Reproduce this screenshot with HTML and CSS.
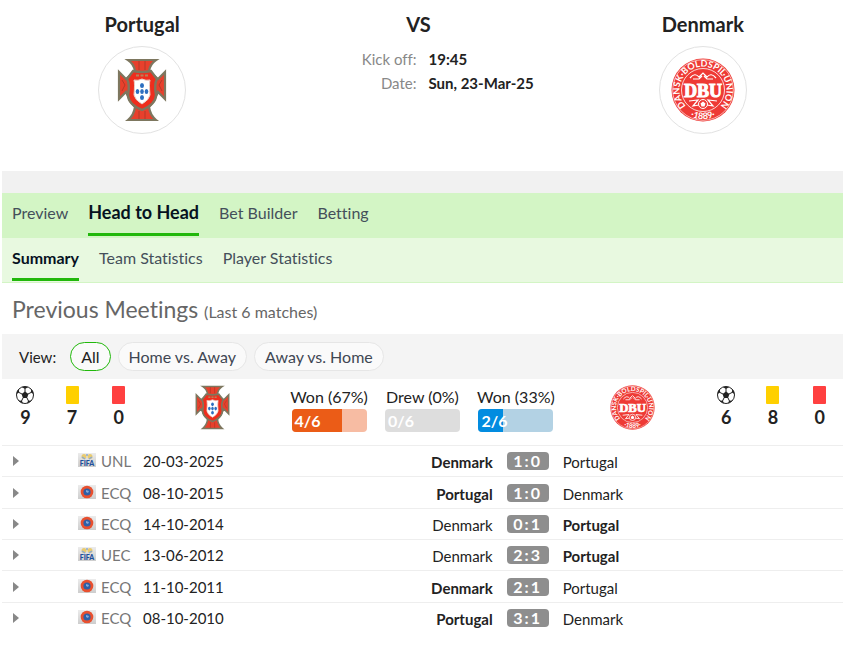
FILE: index.html
```html
<!DOCTYPE html>
<html lang="en">
<head>
  <meta charset="utf-8">
  <meta name="viewport" content="width=device-width, initial-scale=1">
  <title>Portugal vs Denmark - Head to Head</title>
  <link rel="stylesheet" href="styles.css">
</head>
<body>
  <!-- shared icons -->
  <svg class="icon-defs" width="0" height="0" aria-hidden="true">
    <defs>
      <linearGradient id="tile" x1="0" y1="0" x2="0" y2="1">
        <stop offset="0" stop-color="#ececec"/>
        <stop offset="1" stop-color="#cdcdcd"/>
      </linearGradient>
      <path id="ringTop" d="M17 50A23.400 23.400 0 1 1 47 50"/>
      <path id="ringBottom" d="M14 55A29.200 29.200 0 0 0 50 55"/>
    </defs>
    <symbol id="portugal" viewBox="0 0 48 64">
      <path d="M10 2H38Q32 6 31 13L40 21L47 14V41L40 34L36 43L31 49Q32 57 38 62H10Q16 57 17 49L12 43L8 34L1 41V14L8 21L17 13Q16 6 10 2Z" fill="#e8402c" stroke="#7d775f" stroke-width="2.200"/>
      <path d="M21 3V12M27 3V12M21 53V61M27 53V61" stroke="#b23a28" stroke-width="1"/>
      <path d="M4 22L7 27L4 33M44 22L41 27L44 33" fill="none" stroke="#b23a28"/>
      <path d="M9 21L15 13Q24 15 33 13L39 21Q36 26 38 37Q38 46 24 52Q10 46 10 37Q12 26 9 21Z" fill="#ee2e1d" stroke="#7d775f" stroke-width="2.400"/>
      <path d="M18 17.500H30" stroke="#b7825a" stroke-width="2" stroke-dasharray="3 1.500"/>
      <path d="M16 22Q20 23 24 21Q28 23 32 22Q31 26 32 37Q31 42 24 46Q17 42 16 37Q17 26 16 22Z" fill="#fff" stroke="#e9cfc8"/>
      <g fill="#2d6fc0">
        <ellipse cx="24" cy="27.500" rx="2" ry="2.600"/>
        <ellipse cx="19.500" cy="33.500" rx="1.800" ry="2.600"/>
        <ellipse cx="24" cy="33.500" rx="1.800" ry="2.600"/>
        <ellipse cx="28.500" cy="33.500" rx="1.800" ry="2.600"/>
        <ellipse cx="24" cy="39.500" rx="2" ry="2.600"/>
      </g>
    </symbol>
    <symbol id="denmark" viewBox="0 0 64 64">
      <circle cx="32" cy="32" r="31.500" fill="#ee3a35"/>
      <circle cx="32" cy="32" r="30.300" fill="none" stroke="#fff" stroke-width=".6"/>
      <circle cx="32" cy="32" r="21.500" fill="none" stroke="#fff" stroke-width=".8"/>
      <g class="crest-ring">
        <text><textPath href="#ringTop" startOffset="50%">DANSK·BOLDSPIL·UNION</textPath></text>
        <text><textPath href="#ringBottom" startOffset="50%">·1889·</textPath></text>
      </g>
      <path d="M19 20Q24 14 28 19L32 15L36 19Q40 14 45 20M22 21H28L31 18M42 21H36L33 18M18 43L27 42L22 48L28 47M46 43L37 42L42 48L36 47" fill="none" stroke="#fff" stroke-width="1.200"/>
      <circle cx="32" cy="46" r="4.500" fill="none" stroke="#fff"/>
      <path d="M32 43.500L34.500 45.500L33.500 48.500H30.500L29.500 45.500Z" fill="#fff"/>
      <text class="crest-name" x="32" y="39">DBU</text>
    </symbol>
    <symbol id="ball" viewBox="0 0 20 20">
      <circle cx="10" cy="10" r="8.500" fill="#fff" stroke="#222" stroke-width="1"/>
      <g fill="#222">
        <path d="M10 6.500L13.400 9L12.100 13H7.900L6.600 9Z"/>
        <path d="M6.800 2Q10 .8 13.200 2L10 3.900Z"/>
        <path d="M1.400 9Q1.600 5.900 3.600 4L4.300 7.500Z"/>
        <path d="M18.600 9Q18.400 5.900 16.400 4L15.700 7.500Z"/>
        <path d="M3.700 15.600L6.900 15.800L8 18.400Q5.200 17.900 3.700 15.600Z"/>
        <path d="M16.300 15.600L13.100 15.800L12 18.400Q14.800 17.900 16.300 15.600Z"/>
      </g>
      <path d="M10 3.500V7M4 7.500L7 9M16 7.500L13 9M8 13L6.500 16M12 13L13.500 16" stroke="#222"/>
    </symbol>
    <symbol id="fifa" viewBox="0 0 18 14">
      <rect width="18" height="14" fill="url(#tile)"/>
      <circle cx="6" cy="3.500" r="2.500" fill="#e9cb70"/>
      <circle cx="12" cy="3.500" r="2.500" fill="#e9cb70"/>
      <path d="M4 4L7 6M14 4L11 6M8 2H10" stroke="#8aa9d0" stroke-width="1.500"/>
      <text class="fifa-name" x="9" y="13">FIFA</text>
    </symbol>
    <symbol id="uefa" viewBox="0 0 18 14">
      <rect width="18" height="14" fill="url(#tile)"/>
      <circle cx="9" cy="7" r="6.300" fill="#e8502f"/>
      <circle cx="9" cy="7" r="3.600" fill="#2c5fa8"/>
      <path d="M8 5L11 6L10 8L8 7Z" fill="#86a9d6"/>
    </symbol>
  </svg>

  <div class="page">
    <header class="match">
      <div class="team">
        <h2>Portugal</h2>
        <div class="crest-circle">
          <svg class="crest" role="img" aria-label="Portugal"><use href="#portugal"/></svg>
        </div>
      </div>
      <div class="kickoff">
        <h2>VS</h2>
        <dl>
          <dt>Kick off:</dt>
          <dd>19:45</dd>
          <dt>Date:</dt>
          <dd>Sun, 23-Mar-25</dd>
        </dl>
      </div>
      <div class="team">
        <h2>Denmark</h2>
        <div class="crest-circle">
          <svg class="crest" role="img" aria-label="Denmark"><use href="#denmark"/></svg>
        </div>
      </div>
    </header>

    <div class="strip"></div>

    <nav class="tabs">
      <a href="#preview">Preview</a>
      <a href="#h2h" class="active">Head to Head</a>
      <a href="#builder">Bet Builder</a>
      <a href="#betting">Betting</a>
    </nav>
    <nav class="tabs sub-tabs">
      <a href="#summary" class="active">Summary</a>
      <a href="#team">Team Statistics</a>
      <a href="#player">Player Statistics</a>
    </nav>

    <h1>Previous Meetings <small>(Last 6 matches)</small></h1>

    <div class="filters">
      <span class="filters-label">View:</span>
      <button type="button" class="active">All</button>
      <button type="button">Home vs. Away</button>
      <button type="button">Away vs. Home</button>
    </div>

    <section class="stats">
      <div class="counts">
        <div><svg class="ball"><use href="#ball"/></svg><b>9</b></div>
        <div><span class="card yellow"></span><b>7</b></div>
        <div><span class="card red"></span><b>0</b></div>
      </div>
      <svg class="crest-small" role="img" aria-label="Portugal"><use href="#portugal"/></svg>
      <div class="results">
        <div>
          <span>Won (67%)</span>
          <div class="bar home"><div class="fill" style="width: 67%"></div><b>4/6</b></div>
        </div>
        <div>
          <span>Drew (0%)</span>
          <div class="bar draw"><div class="fill" style="width: 0%"></div><b>0/6</b></div>
        </div>
        <div>
          <span>Won (33%)</span>
          <div class="bar away"><div class="fill" style="width: 33%"></div><b>2/6</b></div>
        </div>
      </div>
      <svg class="crest-small" role="img" aria-label="Denmark"><use href="#denmark"/></svg>
      <div class="counts">
        <div><svg class="ball"><use href="#ball"/></svg><b>6</b></div>
        <div><span class="card yellow"></span><b>8</b></div>
        <div><span class="card red"></span><b>0</b></div>
      </div>
    </section>

    <table class="meetings">
      <colgroup>
        <col class="col-toggle">
        <col class="col-comp">
        <col class="col-date">
        <col class="col-home">
        <col class="col-score">
        <col class="col-away">
      </colgroup>
      <tbody>
        <tr>
          <td><span class="arrow"></span></td>
          <td class="comp"><svg class="flag"><use href="#fifa"/></svg>UNL</td>
          <td>20-03-2025</td>
          <td class="home winner">Denmark</td>
          <td class="score"><span>1:0</span></td>
          <td class="away">Portugal</td>
        </tr>
        <tr>
          <td><span class="arrow"></span></td>
          <td class="comp"><svg class="flag"><use href="#uefa"/></svg>ECQ</td>
          <td>08-10-2015</td>
          <td class="home winner">Portugal</td>
          <td class="score"><span>1:0</span></td>
          <td class="away">Denmark</td>
        </tr>
        <tr>
          <td><span class="arrow"></span></td>
          <td class="comp"><svg class="flag"><use href="#uefa"/></svg>ECQ</td>
          <td>14-10-2014</td>
          <td class="home">Denmark</td>
          <td class="score"><span>0:1</span></td>
          <td class="away winner">Portugal</td>
        </tr>
        <tr>
          <td><span class="arrow"></span></td>
          <td class="comp"><svg class="flag"><use href="#fifa"/></svg>UEC</td>
          <td>13-06-2012</td>
          <td class="home">Denmark</td>
          <td class="score"><span>2:3</span></td>
          <td class="away winner">Portugal</td>
        </tr>
        <tr>
          <td><span class="arrow"></span></td>
          <td class="comp"><svg class="flag"><use href="#uefa"/></svg>ECQ</td>
          <td>11-10-2011</td>
          <td class="home winner">Denmark</td>
          <td class="score"><span>2:1</span></td>
          <td class="away">Portugal</td>
        </tr>
        <tr>
          <td><span class="arrow"></span></td>
          <td class="comp"><svg class="flag"><use href="#uefa"/></svg>ECQ</td>
          <td>08-10-2010</td>
          <td class="home winner">Portugal</td>
          <td class="score"><span>3:1</span></td>
          <td class="away">Denmark</td>
        </tr>
      </tbody>
    </table>
  </div>
</body>
</html>
```
FILE: styles.css
```css
* {
  box-sizing: border-box;
}
body {
  margin: 0;
  background: #fff;
  color: #222;
  font-family: Lato, "Liberation Sans", sans-serif;
  font-size: 16px;
  line-height: 24px;
  font-variant-ligatures: none;
}
.icon-defs {
  position: absolute;
}
.page {
  margin-left: 2px;
}

/* match header */
.match {
  display: grid;
  grid-template-columns: 1fr 1fr 1fr;
  padding: 10px 0 37px;
}
.match h2 {
  margin: 0;
  font-size: 20px;
  line-height: 28px;
  font-weight: 700;
  text-align: center;
}
.team {
  display: flex;
  flex-direction: column;
  align-items: center;
  gap: 8px;
}
.crest-circle {
  display: flex;
  align-items: center;
  justify-content: center;
  width: 88px;
  height: 88px;
  border: 1px solid #e2e2e2;
  border-radius: 50%;
}
.crest {
  width: 64px;
  height: 64px;
}
.kickoff h2 {
  padding-right: 8px;
}
.kickoff dl {
  display: grid;
  grid-template-columns: 1fr 1fr;
  column-gap: 12px;
  margin: 9px 0 0;
  font-size: 15px;
}
.kickoff dt {
  color: #888;
  text-align: right;
}
.kickoff dd {
  margin: 0;
  font-weight: 700;
  white-space: nowrap;
}
.crest-ring {
  fill: #fff;
  font-size: 9px;
  font-weight: 700;
  text-anchor: middle;
}
.crest-name {
  fill: #fff;
  stroke: #fff;
  font-family: "Liberation Serif", serif;
  font-size: 18px;
  font-weight: 700;
  text-anchor: middle;
}
.fifa-name {
  fill: #1d4f9c;
  font-size: 7px;
  font-weight: 900;
  text-anchor: middle;
}

.strip {
  height: 22px;
  background: #f1f1f1;
}

/* tabs */
.tabs {
  display: flex;
  gap: 20px;
  height: 45px;
  padding: 0 10px;
  background: #d3f5c5;
}
.tabs a {
  height: 43px;
  padding-top: 8px;
  border-bottom: 3px solid transparent;
  color: #444f5a;
  text-decoration: none;
}
.tabs a.active {
  border-color: #21b80b;
  color: #06121f;
  font-weight: 700;
}
.tabs:not(.sub-tabs) a.active {
  padding-top: 7px;
  font-size: 18px;
}
.sub-tabs {
  background: #e8f9e0;
  border-bottom: 1px solid #d3f5c5;
}

h1 {
  margin: 0;
  padding: 12px 10px 11px;
  color: #666;
  font-size: 23px;
  line-height: 28px;
  font-weight: 400;
}
h1 small {
  font-size: 16px;
  line-height: 16px;
}

/* view filter */
.filters {
  display: flex;
  align-items: center;
  gap: 7px;
  height: 45px;
  padding: 0 17px;
  background: #f4f4f4;
}
.filters-label {
  margin-right: 7px;
  font-size: 15px;
}
.filters button {
  height: 29px;
  padding: 0 10px;
  border: 1px solid #e6e6e6;
  border-radius: 15px;
  background: #fafafa;
  color: #3f4753;
  font: inherit;
  cursor: pointer;
}
.filters button.active {
  border-color: #21b80b;
  color: #222;
}

/* totals */
.stats {
  display: grid;
  grid-template-columns: 1fr 1fr 2fr 1fr 1fr;
  height: 66px;
  padding-top: 6px;
}
.counts,
.results {
  display: grid;
  grid-template-columns: repeat(3, 1fr);
}
.counts > div,
.results > div {
  display: flex;
  flex-direction: column;
  align-items: center;
}
.counts b {
  font-size: 18px;
}
.ball {
  width: 20px;
  height: 20px;
}
.card {
  width: 13px;
  height: 18px;
  margin: 1px 0;
  border-radius: 1px;
}
.card.yellow {
  background: #ffd000;
}
.card.red {
  background: #ff4040;
}
.crest-small {
  width: 45px;
  height: 45px;
  justify-self: center;
}
.results > div > span {
  white-space: nowrap;
}
.bar {
  position: relative;
  width: 75px;
  height: 23px;
  border-radius: 4px;
  overflow: hidden;
  color: #fff;
}
.bar b {
  position: absolute;
  left: 3px;
  top: 0;
  line-height: 23px;
}
.fill {
  height: 100%;
}
.bar.home {
  background: #f7bca3;
}
.home .fill {
  background: #eb5c17;
}
.bar.draw {
  background: #ddd;
}
.bar.away {
  background: #b3d2e4;
}
.away .fill {
  background: #028ce0;
}

/* previous meetings */
.meetings {
  width: 100%;
  height: 188px;
  table-layout: fixed;
  border-collapse: collapse;
  font-size: 15px;
}
.meetings td {
  padding: 0;
  border-top: 1px solid #eee;
}
.col-toggle {
  width: 76px;
}
.col-comp {
  width: 65px;
}
.col-date {
  width: 100px;
}
.col-score {
  width: 70px;
}
.col-away {
  width: 33.333%;
}
.arrow {
  display: block;
  width: 6px;
  margin-left: 11px;
  border: 5px solid transparent;
  border-left: 6px solid #888;
  border-right: 0;
}
.meetings .comp {
  color: #777;
}
.flag {
  width: 18px;
  height: 14px;
  margin-right: 5px;
}
.meetings .home,
.meetings .away {
  padding-top: 2px;
}
.meetings .home {
  text-align: right;
}
.meetings .winner {
  font-weight: 700;
}
.score {
  font-size: 16px;
}
.score span {
  display: block;
  width: 42px;
  margin: 0 auto;
  border-radius: 4px;
  background: #8e8e8e;
  color: #fff;
  font-weight: 700;
  line-height: 18px;
  letter-spacing: 2px;
  text-align: center;
}
```
